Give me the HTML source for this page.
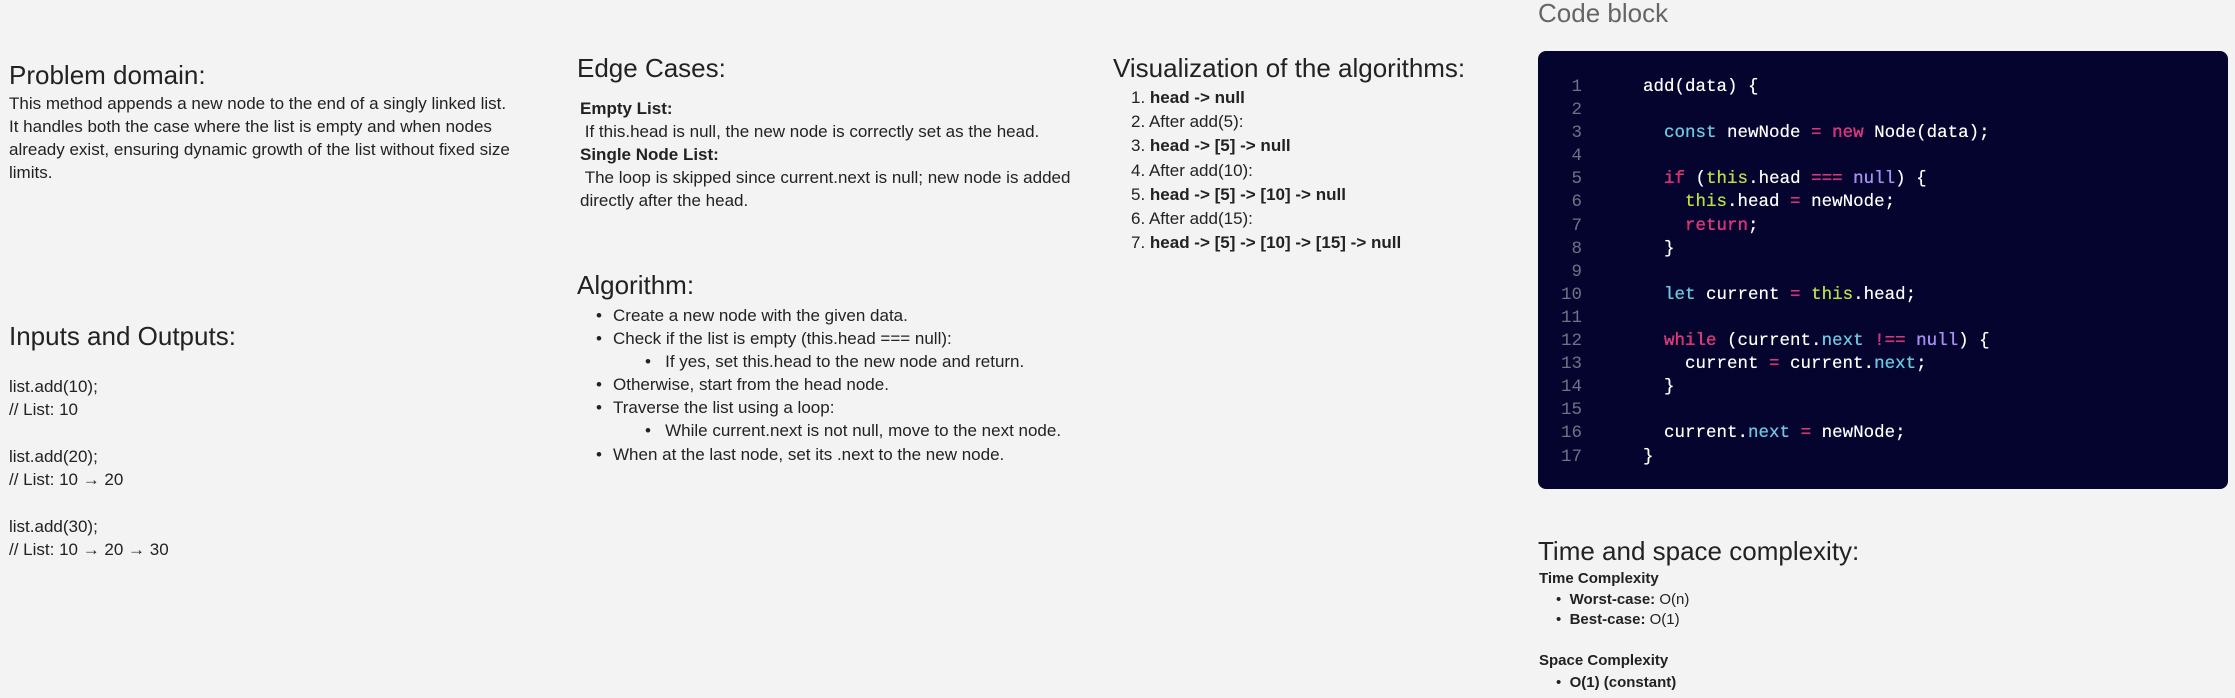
<!DOCTYPE html>
<html><head><meta charset="utf-8"><style>
html,body{margin:0;padding:0;}
body{width:2235px;height:698px;background:#f3f3f3;position:relative;overflow:hidden;font-family:"Liberation Sans",sans-serif;color:#222;}
.a{position:absolute;white-space:nowrap;}
.h{font-size:26px;line-height:30px;color:#222;}
.t{font-size:17px;line-height:23px;}
.s{font-size:15px;line-height:20px;}
b{font-weight:bold;}
.code{position:absolute;left:1538px;top:51px;width:690px;height:438px;background:#04042f;border-radius:8px;}
.ln{position:absolute;left:1560px;width:22px;text-align:right;color:#6e7386;font-family:"Liberation Mono",monospace;font-size:17.5px;line-height:23.1px;}
.cd{position:absolute;left:1643px;color:#fff;font-family:"Liberation Mono",monospace;font-size:17.5px;line-height:23.1px;white-space:pre;text-shadow:0 0 0.4px #fff;}
.k{color:#5fcbe6}.p{color:#f0246e}.g{color:#b9e22e}.n{color:#a98bff}.o{color:#f0246e}
</style></head><body>

<div class="a h" style="left:9px;top:60px">Problem domain:</div>
<div class="a t" style="left:9px;top:92px">This method appends a new node to the end of a singly linked list.<br>It handles both the case where the list is empty and when nodes<br>already exist, ensuring dynamic growth of the list without fixed size<br>limits.</div>

<div class="a h" style="left:9px;top:321px">Inputs and Outputs:</div>
<div class="a t" style="left:9px;top:375px">list.add(10);<br>// List: 10</div>
<div class="a t" style="left:9px;top:445px">list.add(20);<br>// List: 10 → 20</div>
<div class="a t" style="left:9px;top:515px">list.add(30);<br>// List: 10 → 20 → 30</div>

<div class="a h" style="left:577px;top:53px">Edge Cases:</div>
<div class="a t" style="left:580px;top:97px"><b>Empty List:</b><br>&nbsp;If this.head is null, the new node is correctly set as the head.<br><b>Single Node List:</b><br>&nbsp;The loop is skipped since current.next is null; new node is added<br>directly after the head.</div>

<div class="a h" style="left:577px;top:270px">Algorithm:</div>
<div class="a t" style="left:596px;top:304px;line-height:23.1px">•<br>•<br><br>•<br>•<br><br>•</div>
<div class="a t" style="left:613px;top:304px;line-height:23.1px">Create a new node with the given data.<br>Check if the list is empty (this.head === null):<br><br>Otherwise, start from the head node.<br>Traverse the list using a loop:<br><br>When at the last node, set its .next to the new node.</div>
<div class="a t" style="left:645px;top:350px;line-height:23.1px">•&nbsp;&nbsp;&nbsp;If yes, set this.head to the new node and return.</div>
<div class="a t" style="left:645px;top:419px;line-height:23.1px">•&nbsp;&nbsp;&nbsp;While current.next is not null, move to the next node.</div>

<div class="a h" style="left:1113px;top:53px">Visualization of the algorithms:</div>
<div class="a t" style="left:1131px;top:86px;line-height:24.2px">1. <b>head -&gt; null</b><br>2. After add(5):<br>3. <b>head -&gt; [5] -&gt; null</b><br>4. After add(10):<br>5. <b>head -&gt; [5] -&gt; [10] -&gt; null</b><br>6. After add(15):<br>7. <b>head -&gt; [5] -&gt; [10] -&gt; [15] -&gt; null</b></div>

<div class="a h" style="left:1538px;top:-2px;color:#666">Code block</div>
<div class="code"></div>
<div class="ln" style="top:76px">1<br>2<br>3<br>4<br>5<br>6<br>7<br>8<br>9<br>10<br>11<br>12<br>13<br>14<br>15<br>16<br>17</div>
<div class="cd" style="top:76px">add(data) {

  <span class="k">const</span> newNode <span class="o">=</span> <span class="p">new</span> Node(data);

  <span class="p">if</span> (<span class="g">this</span>.head <span class="o">===</span> <span class="n">null</span>) {
    <span class="g">this</span>.head <span class="o">=</span> newNode;
    <span class="p">return</span>;
  }

  <span class="k">let</span> current <span class="o">=</span> <span class="g">this</span>.head;

  <span class="p">while</span> (current.<span class="k">next</span> <span class="o">!==</span> <span class="n">null</span>) {
    current <span class="o">=</span> current.<span class="k">next</span>;
  }

  current.<span class="k">next</span> <span class="o">=</span> newNode;
}</div>

<div class="a h" style="left:1538px;top:536px">Time and space complexity:</div>
<div class="a s" style="left:1539px;top:569px"><b>Time Complexity</b></div>
<div class="a s" style="left:1556px;top:590px">•&nbsp;&nbsp;<b>Worst-case:</b> O(n)</div>
<div class="a s" style="left:1556px;top:610px">•&nbsp;&nbsp;<b>Best-case:</b> O(1)</div>
<div class="a s" style="left:1539px;top:651px"><b>Space Complexity</b></div>
<div class="a s" style="left:1556px;top:673px">•&nbsp;&nbsp;<b>O(1) (constant)</b></div>

</body></html>
